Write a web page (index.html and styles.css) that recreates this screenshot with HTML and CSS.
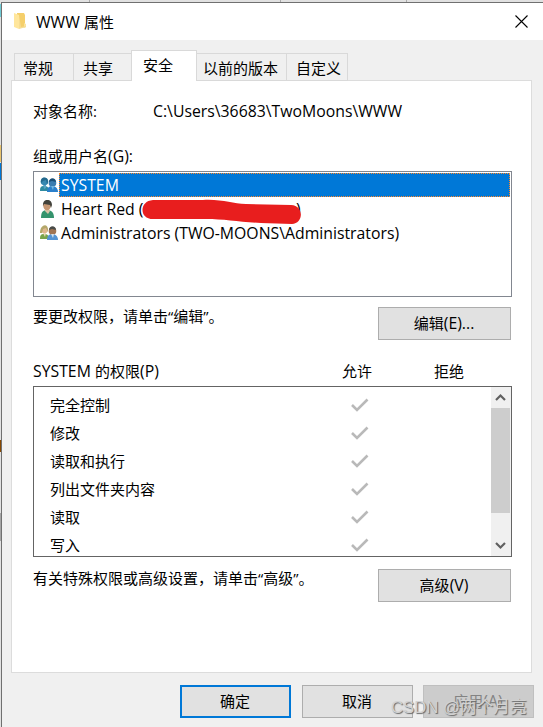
FILE: index.html
```
<!DOCTYPE html>
<html lang="zh-CN">
  <head>
    <meta charset="utf-8">
    <title>WWW 属性</title>
    <link rel="stylesheet" href="styles.css">
  </head>
  <body>
    <div class="dialog">
      <div class="titlebar">
        <svg class="folder" width="14" height="18" viewBox="0 0 14 18">
          <path d="M3 1h7l1 2v9l1 1v2l-7 1-2-1z" fill="#f5cf6b"/>
          <path d="M10 11l2 1v3l-2 1z" fill="#fae39d"/>
          <path d="M0 1l5 2v14l-5-2z" fill="#ffe69c"/>
          <path d="M5 3v14l7-2v-1l-5 1z" fill="#f6dc93"/>
        </svg>
        <span class="title"><span class="latin">WWW </span>属性</span>
        <svg class="close" width="13" height="13" viewBox="0 0 13 13">
          <path d="M.5 .5l12 12M12.5 .5l-12 12" stroke="#000" stroke-width="1.1"/>
        </svg>
      </div>

      <div class="tabs">
        <div class="tab general">常规</div>
        <div class="tab share">共享</div>
        <div class="tab active">安全</div>
        <div class="tab versions">以前的版本</div>
        <div class="tab custom">自定义</div>
      </div>

      <div class="panel">
        <div class="object">
          <span class="object-label">对象名称:</span>
          <span class="latin path">C:\Users\36683\TwoMoons\WWW</span>
        </div>

        <div class="label">组或用户名<span class="latin">(G):</span></div>
        <div class="users">
          <div class="user">
            <svg width="20" height="18" viewBox="0 0 20 18">
              <path d="M1 15c0-4 1-5 4-5s5 1 5 5z" fill="#2f8ba0"/>
              <path d="M8 16c0-4 2-6 5-6s6 2 6 6z" fill="#2b80cb"/>
              <path d="M4 8h3v4l-2 1z" fill="#5ba4c5"/>
              <circle cx="5.500" cy="5.500" r="3.800" fill="#3788b1"/>
              <path d="M2 7c-1-7 7-7 7-1l-1 2-1-4-3 1z" fill="#24698d"/>
              <circle cx="13.500" cy="7" r="3.800" fill="#3a7cb0"/>
              <path d="M10 6c0-5 7-5 7 0l-4-1z" fill="#194e76"/>
              <path d="M12 10h3l-1 4z" fill="#75b9e0"/>
            </svg>
            <span class="name latin selected">SYSTEM</span>
          </div>
          <div class="user">
            <svg width="20" height="18" viewBox="0 0 20 18">
              <path d="M2 18c0-6 2-8 6-8s7 2 7 8z" fill="#35936d"/>
              <path d="M6 9h4l1 2-2 3-3-3z" fill="#d9c3a7"/>
              <ellipse cx="8" cy="5.500" rx="3.800" ry="4.800" fill="#c69773"/>
              <path d="M4 6c-1-8 9-8 9-1l-1 3-1-3-6-1z" fill="#42423b"/>
            </svg>
            <span class="name latin user-name">Heart Red (</span>
            <svg class="redaction" width="160" height="26" viewBox="0 0 160 26">
              <path d="M12 1H62C82 0 91 5 105 5L150 6C164 7 162 25 151 25L120 24C99 23 83 20 65 20H12C-2 20-2 2 12 1z" fill="#e81e1e"/>
            </svg>
            <span class="latin">)</span>
          </div>
          <div class="user">
            <svg width="20" height="18" viewBox="0 0 20 18">
              <path d="M1 15c0-4 1-5 4-5s5 1 5 5z" fill="#78a44b"/>
              <path d="M8 16c0-4 2-6 5-6s6 2 6 6z" fill="#5594d3"/>
              <circle cx="5.500" cy="6" r="3.300" fill="#dfb78d"/>
              <path d="M1 9c0-9 9-11 8-1l-2-4-3 1-1 4z" fill="#b4a76a"/>
              <circle cx="13.500" cy="7" r="3.800" fill="#a17553"/>
              <path d="M10 6c0-5 7-5 7 0l-4-1z" fill="#494b48"/>
              <path d="M4 9h3l-1 4z" fill="#eed7b7"/>
              <path d="M12 10h3l-1 4z" fill="#d4e2ed"/>
            </svg>
            <span class="name latin">Administrators (TWO-MOONS\Administrators)</span>
          </div>
        </div>

        <div class="action">
          <span>要更改权限，请单击“编辑”。</span>
          <div class="button">编辑<span class="latin">(E)...</span></div>
        </div>

        <div class="perm-head">
          <span class="perm-name"><span class="latin">SYSTEM </span>的权限<span class="latin">(P)</span></span>
          <span class="allow">允许</span>
          <span class="deny">拒绝</span>
        </div>
        <div class="perms">
          <div class="perm-list">
            <div class="perm"><span>完全控制</span><svg class="check" width="18" height="14" viewBox="0 0 18 14"><path d="M1 7l5 5L16.500 1.500"/></svg></div>
            <div class="perm"><span>修改</span><svg class="check" width="18" height="14" viewBox="0 0 18 14"><path d="M1 7l5 5L16.500 1.500"/></svg></div>
            <div class="perm"><span>读取和执行</span><svg class="check" width="18" height="14" viewBox="0 0 18 14"><path d="M1 7l5 5L16.500 1.500"/></svg></div>
            <div class="perm"><span>列出文件夹内容</span><svg class="check" width="18" height="14" viewBox="0 0 18 14"><path d="M1 7l5 5L16.500 1.500"/></svg></div>
            <div class="perm"><span>读取</span><svg class="check" width="18" height="14" viewBox="0 0 18 14"><path d="M1 7l5 5L16.500 1.500"/></svg></div>
            <div class="perm"><span>写入</span><svg class="check" width="18" height="14" viewBox="0 0 18 14"><path d="M1 7l5 5L16.500 1.500"/></svg></div>
          </div>
          <div class="scrollbar">
            <svg class="arrow" width="19" height="21" viewBox="0 0 19 21"><path d="M5 13l4.500-4.500 4.500 4.500"/></svg>
            <div class="thumb"></div>
            <svg class="arrow" width="19" height="21" viewBox="0 0 19 21"><path d="M5 8l4.500 4.500 4.500-4.500"/></svg>
          </div>
        </div>

        <div class="action advanced">
          <span>有关特殊权限或高级设置，请单击“高级”。</span>
          <div class="button">高级<span class="latin">(V)</span></div>
        </div>
      </div>

      <div class="footer">
        <div class="button ok">确定</div>
        <div class="button">取消</div>
        <div class="button disabled">应用<span class="latin">(A)</span></div>
      </div>
    </div>
    <div class="watermark">CSDN @两个月亮</div>
  </body>
</html>
```

FILE: styles.css
```
* {
  box-sizing: border-box;
}
body {
  margin: 0;
  height: 727px;
  padding: 2px 0 0 1px;
  overflow: hidden;
  position: relative;
  color: #000;
  font-family: "Open Sans", "Noto Sans CJK SC", sans-serif;
  font-size: 15px;
  line-height: 24px;
  white-space: nowrap;
  background:
    linear-gradient(#aaa, #aaa) 89px 0 / 1px 2px no-repeat,
    linear-gradient(#aaa, #aaa) 280px 0 / 1px 2px no-repeat,
    linear-gradient(#aaa, #aaa) 406px 0 / 1px 2px no-repeat,
    linear-gradient(#6fcbd5, #6fcbd5) 0 4px / 1px 13px no-repeat,
    linear-gradient(#e9c46d, #e9c46d) 0 145px / 1px 17px no-repeat,
    linear-gradient(#0078d7, #0078d7) 0 163px / 1px 17px no-repeat,
    linear-gradient(#874800, #874800) 0 440px / 1px 12px no-repeat,
    linear-gradient(#a5a5a5, #a5a5a5) 0 513px / 1px 28px no-repeat,
    #e1e1e1;
}
.latin {
  font-size: 15.8px;
  line-height: 22px;
  white-space: pre;
}
.dialog {
  height: 725px;
  border-top: 1px solid #707070;
  border-left: 1px solid #707070;
  background: #f0f0f0;
}
.titlebar {
  display: flex;
  align-items: center;
  height: 37px;
  padding: 0 15px 0 12px;
  background: #fff;
}
.folder {
  margin-bottom: 2px;
}
.title {
  flex: 1;
  margin-left: 8px;
}
.tabs {
  display: flex;
  align-items: flex-end;
  height: 41px;
  padding-left: 12px;
}
.tab {
  height: 28px;
  padding-left: 8px;
  line-height: 28px;
  border: 1px solid #d9d9d9;
  border-right: 0;
}
.general {
  width: 59px;
}
.share {
  width: 58px;
  padding-left: 9px;
}
.tab.active {
  z-index: 1;
  width: 66px;
  height: 31px;
  padding-left: 11px;
  background: #fff;
  border-right: 1px solid #d9d9d9;
  border-bottom: 0;
}
.versions {
  width: 89px;
  padding-left: 6px;
  border-left: 0;
}
.custom {
  width: 62px;
  padding-left: 9px;
  border-right: 1px solid #d9d9d9;
}
.panel {
  width: 521px;
  height: 593px;
  margin: -1px 0 0 9px;
  padding: 18px 19px 0 21px;
  background: #fff;
  border: 1px solid #dcdcdc;
}
.object {
  display: flex;
  height: 24px;
}
.object-label {
  width: 120px;
}
.path {
  line-height: 24px;
}
.label {
  height: 24px;
  margin: 21px 0 3px;
}
.users {
  height: 126px;
  padding: 1px;
  border: 1px solid #828790;
}
.user {
  display: flex;
  align-items: center;
  height: 24px;
  padding-left: 4px;
  position: relative;
}
.name {
  padding-left: 2px;
}
.user-name {
  width: 237px;
}
.name.selected {
  flex: 1;
  padding-left: 1px;
  color: #fff;
  background: #0078d7;
  border: 1px dotted #ff8728;
}
.redaction {
  position: absolute;
  left: 106px;
  top: 2px;
}
.action {
  display: flex;
  justify-content: space-between;
  height: 33px;
  margin: 10px 1px 0 0;
  line-height: 18px;
}
.button {
  width: 133px;
  height: 33px;
  padding-right: 1px;
  text-align: center;
  line-height: 30px;
  background: #e1e1e1;
  border: 1px solid #adadad;
}
.perm-head {
  display: flex;
  height: 24px;
  margin-top: 19px;
}
.perm-name {
  width: 309px;
}
.allow {
  width: 92px;
}
.perms {
  display: flex;
  height: 171px;
  margin-top: 3px;
  border: 1px solid #646464;
}
.perm-list {
  flex: 1;
  padding-top: 4px;
  overflow: hidden;
}
.perm {
  display: flex;
  align-items: center;
  height: 28px;
  padding-left: 16px;
}
.perm span {
  width: 301px;
}
.check path {
  fill: none;
  stroke: #b9b9b9;
  stroke-width: 2.6;
}
.scrollbar {
  display: flex;
  flex-direction: column;
  width: 20px;
  background: #f0f0f0;
}
.thumb {
  width: 19px;
  height: 105px;
  margin-bottom: 22px;
  background: #cdcdcd;
}
.arrow path {
  fill: none;
  stroke: #606060;
  stroke-width: 2.2;
}
.advanced {
  margin-top: 12px;
}
.footer {
  display: flex;
  gap: 11px;
  margin: 12px 0 0 178px;
}
.footer .button {
  width: 111px;
}
.footer .ok {
  border: 2px solid #0078d7;
  line-height: 28px;
}
.footer .disabled {
  margin-left: -1px;
  background: #ccc;
  border-color: #bfbfbf;
  color: #838383;
}
.watermark {
  position: absolute;
  left: 391px;
  top: 696px;
  font-family: "Liberation Sans", "Noto Sans CJK SC", sans-serif;
  font-size: 16.7px;
  color: #d2d2d2;
  text-shadow: 1px 1px 1px #666;
}
```
